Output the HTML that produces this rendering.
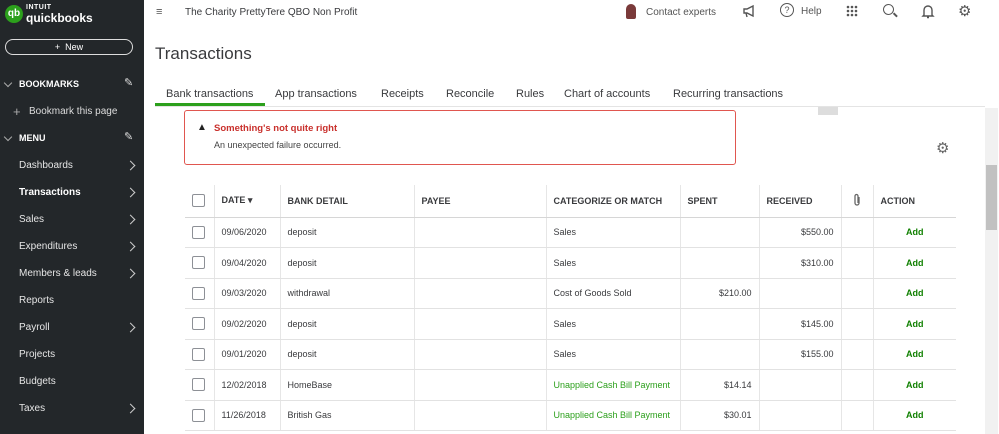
<!DOCTYPE html>
<html><head><style>
*{box-sizing:border-box;margin:0;padding:0}
body{width:999px;height:434px;overflow:hidden;font-family:"Liberation Sans",sans-serif;background:#fff;position:relative}
#sb{position:absolute;left:0;top:0;width:144px;height:434px;background:#23272a;color:#e8e8e8}
.abs{position:absolute}
#sb .it{position:absolute;left:19px;font-size:10px;color:#e6e6e6}
#sb .ch{position:absolute;right:10px;width:7px;height:7px;border-right:1.5px solid #ccc;border-top:1.5px solid #ccc;transform:rotate(45deg)}
.tab{position:absolute;top:88px;font-size:11px;color:#393a3d}
table{position:absolute;left:185px;top:185px;border-collapse:collapse;font-size:9px;color:#393a3d}
td,th{height:30.5px;border-bottom:1px solid #e2e2e2;border-right:1px solid #e6e6e6;padding:0 7px;text-align:left;white-space:nowrap}
th{height:32px;font-size:9px;font-weight:bold;color:#393a3d;border-bottom:1.5px solid #d6d6d6}
td:last-child,th:last-child{border-right:none}
.cb{display:inline-block;width:13px;height:13px;border:1px solid #8d9096;border-radius:2px;vertical-align:middle}
.r{text-align:right}
.g{color:#2ca01c}
.add{color:#108000;font-weight:bold;text-align:center}
</style></head><body>
<div id="sb">
 <div class="abs" style="left:5px;top:5px;width:18px;height:18px;border-radius:50%;background:#2ca01c;color:#fff;font-size:10px;font-weight:bold;text-align:center;line-height:18px">qb</div>
 <div class="abs" style="left:26px;top:4px;font-size:7px;font-weight:bold;color:#fff;letter-spacing:.5px">INTUIT</div>
 <div class="abs" style="left:26px;top:11px;font-size:12px;font-weight:bold;color:#fff">quickbooks</div>
 <div class="abs" style="left:5px;top:39px;width:128px;height:16px;border:1px solid #ddd;border-radius:9px;text-align:center;font-size:9px;line-height:14px;color:#fff">+&nbsp; New</div>
 <div class="abs" style="left:5px;top:80px;width:6px;height:6px;border-right:1px solid #aaa;border-bottom:1px solid #aaa;transform:rotate(45deg)"></div>
 <div class="abs" style="left:19px;top:79px;font-size:9px;font-weight:bold;color:#fff">BOOKMARKS</div>
 <div class="abs" style="left:124px;top:76px;font-size:11px;color:#ddd">✎</div>
 <div class="abs" style="left:13px;top:104px;font-size:13px;color:#aaa">+</div>
 <div class="abs" style="left:29px;top:106px;font-size:10px;color:#ddd">Bookmark this page</div>
 <div class="abs" style="left:5px;top:134px;width:6px;height:6px;border-right:1px solid #aaa;border-bottom:1px solid #aaa;transform:rotate(45deg)"></div>
 <div class="abs" style="left:19px;top:133px;font-size:9px;font-weight:bold;color:#fff">MENU</div>
 <div class="abs" style="left:124px;top:130px;font-size:11px;color:#ddd">✎</div>
 <div class="it" style="top:160px">Dashboards</div><div class="ch" style="top:162px"></div>
 <div class="it" style="top:187px;font-weight:bold;color:#fff">Transactions</div><div class="ch" style="top:189px"></div>
 <div class="it" style="top:214px">Sales</div><div class="ch" style="top:216px"></div>
 <div class="it" style="top:241px">Expenditures</div><div class="ch" style="top:243px"></div>
 <div class="it" style="top:268px">Members &amp; leads</div><div class="ch" style="top:270px"></div>
 <div class="it" style="top:295px">Reports</div>
 <div class="it" style="top:322px">Payroll</div><div class="ch" style="top:324px"></div>
 <div class="it" style="top:349px">Projects</div>
 <div class="it" style="top:376px">Budgets</div>
 <div class="it" style="top:403px">Taxes</div><div class="ch" style="top:405px"></div>
</div>
<div class="abs" style="left:156px;top:6px;font-size:11px;color:#555">≡</div>
<div class="abs" style="left:185px;top:7px;font-size:10px;color:#393a3d">The Charity PrettyTere QBO Non Profit</div>
<div class="abs" style="left:626px;top:4px;width:10px;height:15px;border-radius:5px 5px 2px 2px;background:#7a3a3a"></div>
<div class="abs" style="left:646px;top:7px;font-size:10px;color:#555">Contact experts</div>
<svg class="abs" style="left:742px;top:4px" width="14" height="14" viewBox="0 0 14 14" fill="none" stroke="#555" stroke-width="1.4"><path d="M2 5h3l6-3v10l-6-3H2z M4 9l1 4"/></svg>
<div class="abs" style="left:780px;top:3px;width:14px;height:14px;border:1.3px solid #555;border-radius:50%;font-size:9px;text-align:center;line-height:12px;color:#555">?</div>
<div class="abs" style="left:801px;top:6px;font-size:10px;color:#555">Help</div>
<svg class="abs" style="left:846px;top:5px" width="12" height="12"><g fill="#555"><circle cx="2" cy="2" r="1.3"/><circle cx="6" cy="2" r="1.3"/><circle cx="10" cy="2" r="1.3"/><circle cx="2" cy="6" r="1.3"/><circle cx="6" cy="6" r="1.3"/><circle cx="10" cy="6" r="1.3"/><circle cx="2" cy="10" r="1.3"/><circle cx="6" cy="10" r="1.3"/><circle cx="10" cy="10" r="1.3"/></g></svg>
<div class="abs" style="left:883px;top:4px;width:11px;height:11px;border:1.5px solid #555;border-radius:50%"></div>
<div class="abs" style="left:893px;top:14px;width:5px;height:1.5px;background:#555;transform:rotate(45deg)"></div>
<svg class="abs" style="left:921px;top:3px" width="14" height="16" viewBox="0 0 14 16" fill="none" stroke="#555" stroke-width="1.4"><path d="M3 12V7a4 4 0 0 1 8 0v5l1 1H2z M6 14.5h2"/></svg>
<div class="abs" style="left:958px;top:2px;font-size:15px;color:#555">⚙</div>
<div class="abs" style="left:155px;top:44px;font-size:17px;color:#393a3d">Transactions</div>
<div class="abs" style="left:155px;top:106px;width:830px;height:1px;background:#e4e4e4"></div>
<div class="tab" style="left:166px;color:#393a3d">Bank transactions</div>
<div class="abs" style="left:155px;top:103px;width:110px;height:3px;background:#2ca01c"></div>
<div class="tab" style="left:275px">App transactions</div>
<div class="tab" style="left:381px">Receipts</div>
<div class="tab" style="left:446px">Reconcile</div>
<div class="tab" style="left:516px">Rules</div>
<div class="tab" style="left:564px">Chart of accounts</div>
<div class="tab" style="left:673px">Recurring transactions</div>
<div class="abs" style="left:184px;top:110px;width:552px;height:55px;border:1px solid #e0564f;border-radius:3px"></div>
<div class="abs" style="left:197px;top:122px;font-size:10px;color:#222">▲</div>
<div class="abs" style="left:214px;top:123px;font-size:9.5px;font-weight:bold;color:#c9302c">Something's not quite right</div>
<div class="abs" style="left:214px;top:140px;font-size:9px;color:#444">An unexpected failure occurred.</div>
<div class="abs" style="left:818px;top:107px;width:20px;height:8px;background:#ddd"></div>
<div class="abs" style="left:936px;top:139px;font-size:15px;color:#666">⚙</div>
<div class="abs" style="left:985px;top:108px;width:13px;height:326px;background:#f1f1f1"></div>
<div class="abs" style="left:986px;top:165px;width:11px;height:65px;background:#c1c1c1"></div>
<table>
<tr><th style="width:29px"><span class="cb"></span></th><th style="width:66px">DATE ▾</th><th style="width:134px">BANK DETAIL</th><th style="width:132px">PAYEE</th><th style="width:134px">CATEGORIZE OR MATCH</th><th style="width:79px">SPENT</th><th style="width:82px">RECEIVED</th><th style="width:32px;text-align:center"><svg width="8" height="14" viewBox="0 0 8 14" fill="none" stroke="#666" stroke-width="1.3"><path d="M6 4v6a2 2 0 0 1-4 0V3a1.5 1.5 0 0 1 3 0v7"/></svg></th><th style="width:83px">ACTION</th></tr>
<tr><td><span class="cb"></span></td><td>09/06/2020</td><td>deposit</td><td></td><td>Sales</td><td></td><td class="r">$550.00</td><td></td><td class="add">Add</td></tr>
<tr><td><span class="cb"></span></td><td>09/04/2020</td><td>deposit</td><td></td><td>Sales</td><td></td><td class="r">$310.00</td><td></td><td class="add">Add</td></tr>
<tr><td><span class="cb"></span></td><td>09/03/2020</td><td>withdrawal</td><td></td><td>Cost of Goods Sold</td><td class="r">$210.00</td><td></td><td></td><td class="add">Add</td></tr>
<tr><td><span class="cb"></span></td><td>09/02/2020</td><td>deposit</td><td></td><td>Sales</td><td></td><td class="r">$145.00</td><td></td><td class="add">Add</td></tr>
<tr><td><span class="cb"></span></td><td>09/01/2020</td><td>deposit</td><td></td><td>Sales</td><td></td><td class="r">$155.00</td><td></td><td class="add">Add</td></tr>
<tr><td><span class="cb"></span></td><td>12/02/2018</td><td>HomeBase</td><td></td><td class="g">Unapplied Cash Bill Payment</td><td class="r">$14.14</td><td></td><td></td><td class="add">Add</td></tr>
<tr><td><span class="cb"></span></td><td>11/26/2018</td><td>British Gas</td><td></td><td class="g">Unapplied Cash Bill Payment</td><td class="r">$30.01</td><td></td><td></td><td class="add">Add</td></tr>
</table>
</body></html>
